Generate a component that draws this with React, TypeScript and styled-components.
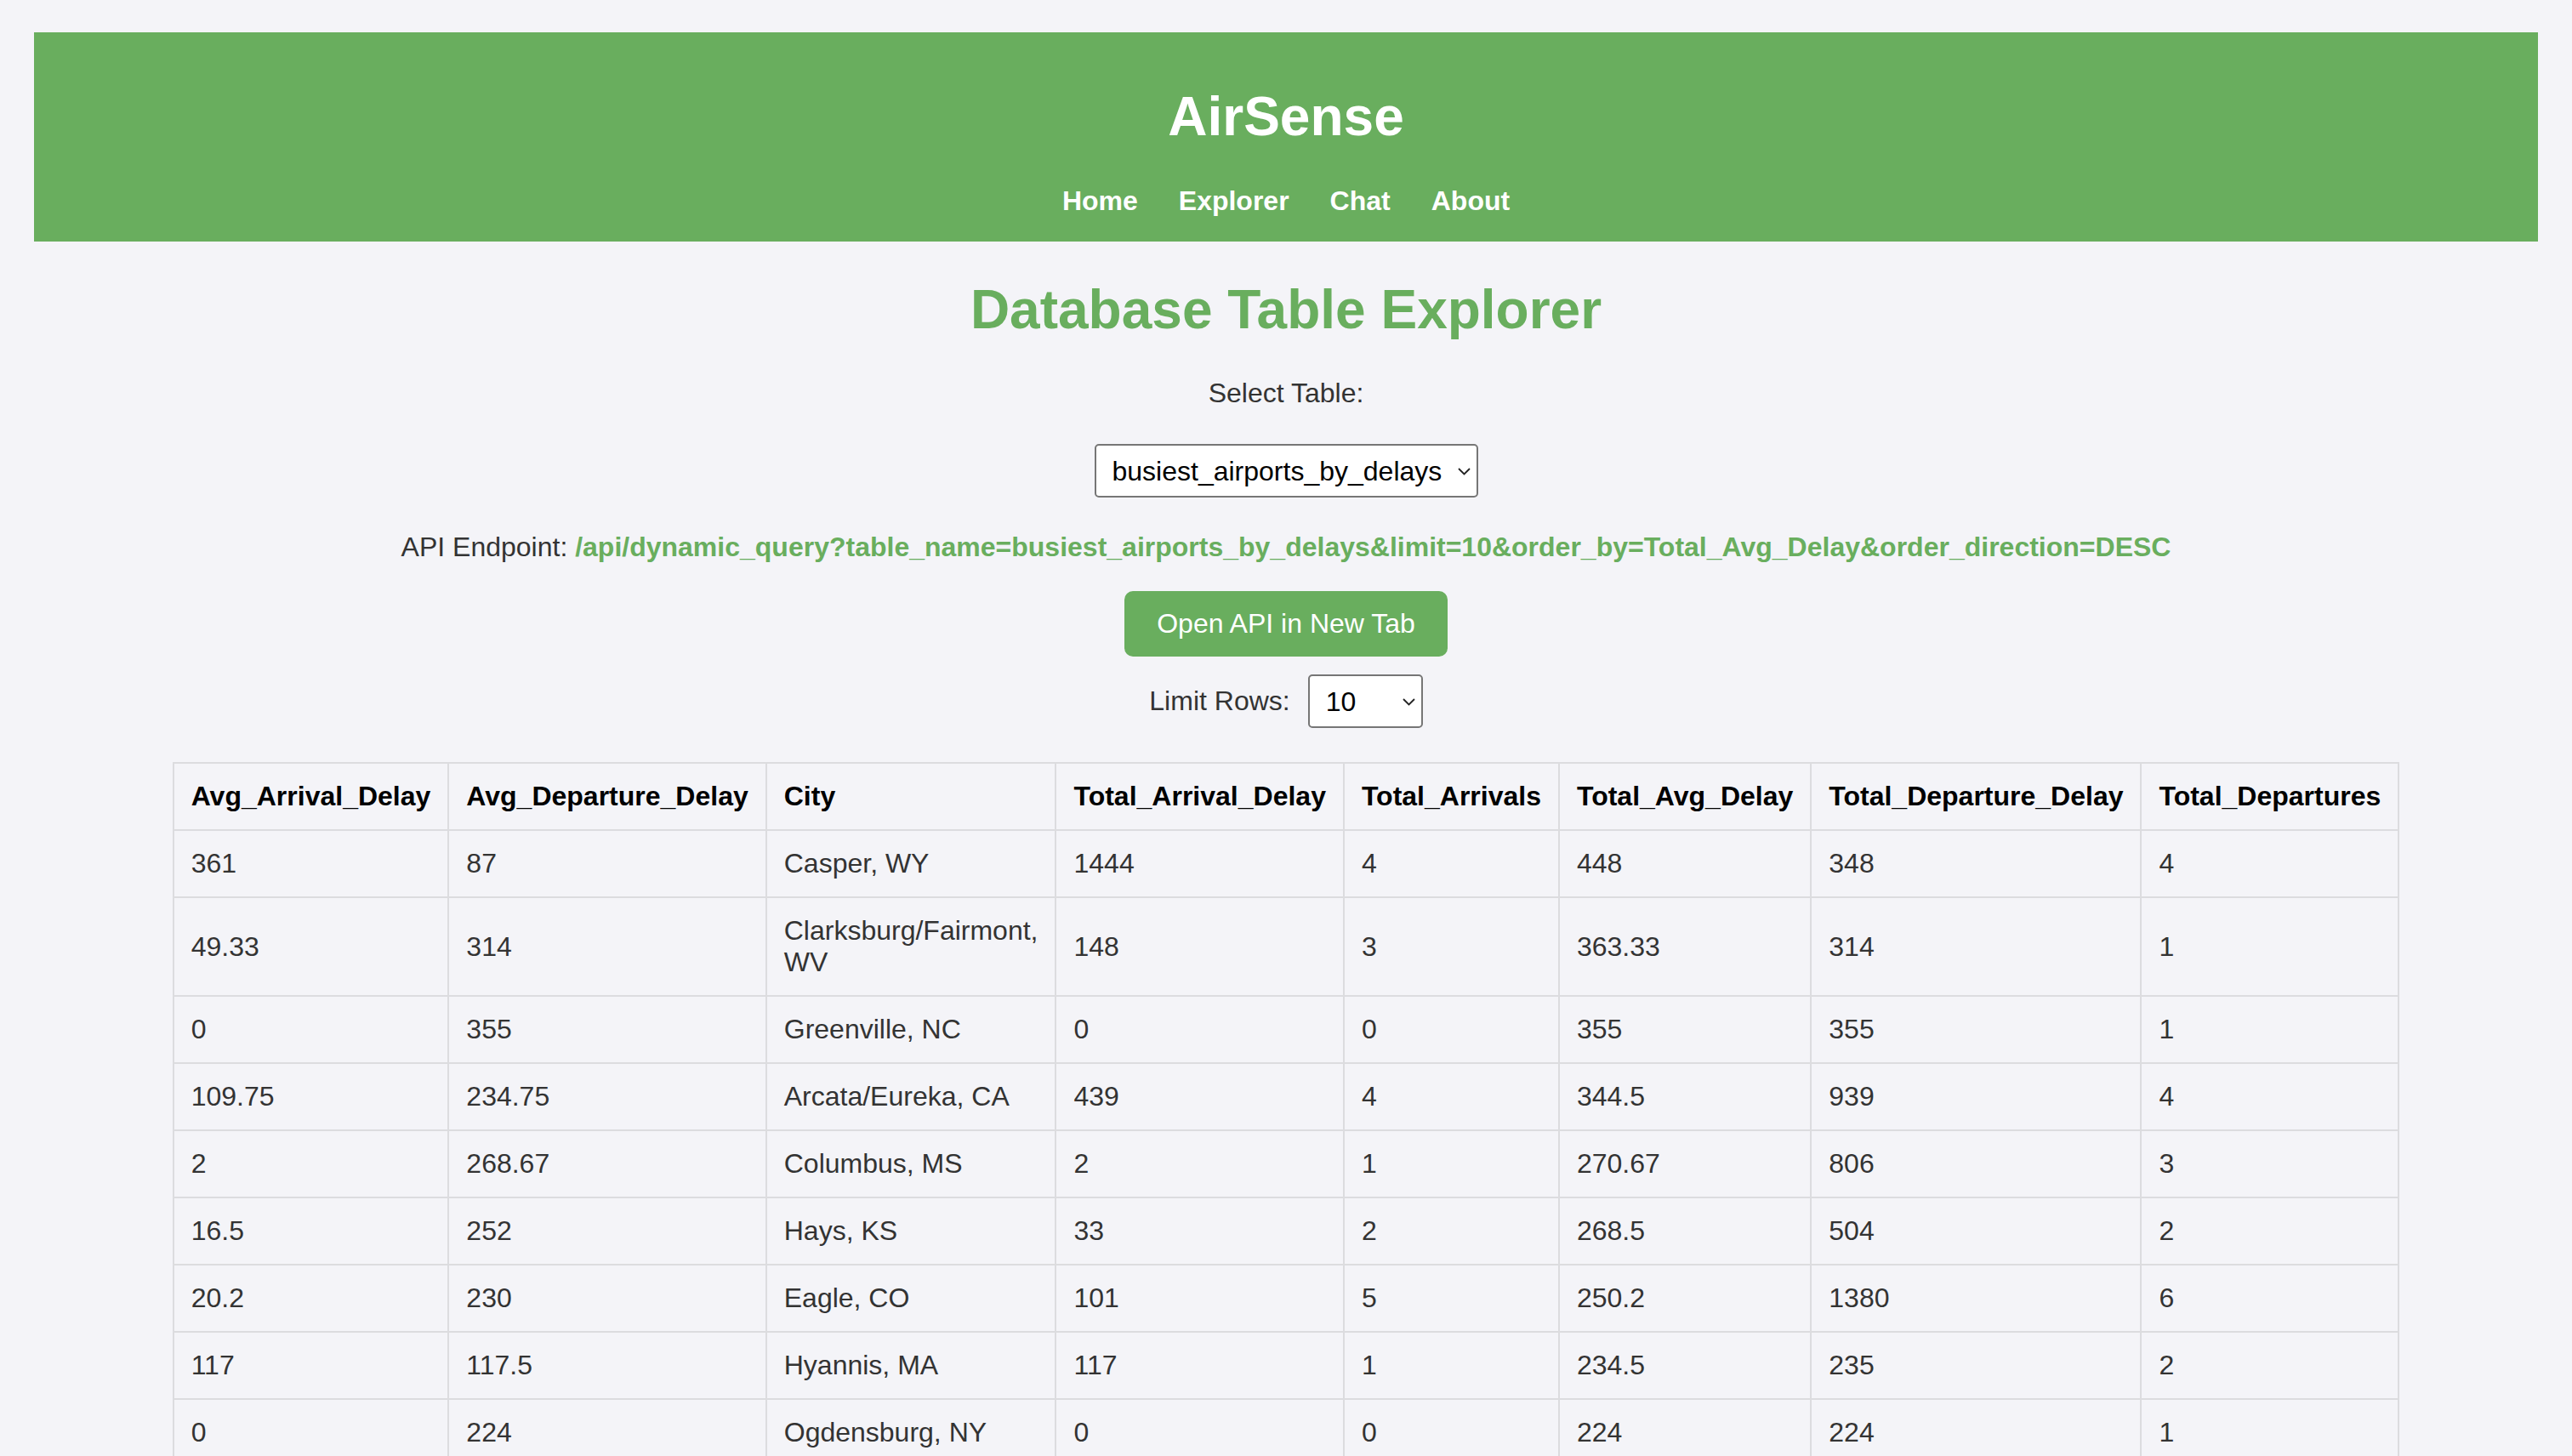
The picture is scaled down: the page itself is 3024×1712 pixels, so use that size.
import React from "react";
import styled, { createGlobalStyle } from "styled-components";

const GREEN = "#69ae5e";

const GlobalStyle = createGlobalStyle`
  html, body {
    margin: 0;
    padding: 0;
    background: #f4f4f8;
    font-family: "Liberation Sans", Arial, Helvetica, sans-serif;
    color: #333;
  }
`;

const Page = styled.div`
  padding: 38px 40px 0;
`;

const Header = styled.header`
  background: ${GREEN};
  padding: 30px 0 29px;
  text-align: center;
  color: #fff;
`;

const Brand = styled.h1`
  margin: 32px 0 44px;
  font-size: 64px;
  line-height: 74px;
  font-weight: 700;
`;

const Nav = styled.nav`
  display: flex;
  justify-content: center;
  line-height: 37px;
`;

const NavLink = styled.a`
  margin: 0 24px;
  color: #fff;
  font-size: 32px;
  font-weight: 700;
  text-decoration: none;
`;

const Main = styled.main`
  display: flex;
  flex-direction: column;
  align-items: center;
`;

const Title = styled.h2`
  margin: 43px 0 43px;
  font-size: 64px;
  line-height: 74px;
  font-weight: 700;
  color: ${GREEN};
`;

const Label = styled.label`
  font-size: 32px;
  line-height: 37px;
  color: #333;
`;

const SelectWrap = styled.div<{ $mt: number; $w: number }>`
  position: relative;
  margin-top: ${(p) => p.$mt}px;
  width: ${(p) => p.$w}px;
  height: 63px;
`;

const Select = styled.select`
  appearance: none;
  -webkit-appearance: none;
  box-sizing: border-box;
  width: 100%;
  height: 100%;
  padding: 0 40px 0 19px;
  border: 2px solid #767676;
  border-radius: 5px;
  background: #fff;
  color: #000;
  font-family: "Liberation Sans", Arial, Helvetica, sans-serif;
  font-size: 32px;
  outline: none;
`;

const Chevron = styled.svg`
  position: absolute;
  right: 9px;
  top: 50%;
  margin-top: -4px;
  width: 15px;
  height: 9px;
  pointer-events: none;
`;

const ApiLine = styled.p`
  margin: 40px 0 0;
  font-size: 32px;
  line-height: 37px;
  color: #333;
`;

const ApiLink = styled.a`
  color: ${GREEN};
  font-weight: 700;
  text-decoration: none;
`;

const Button = styled.button`
  margin-top: 33px;
  height: 77px;
  padding: 0 38px;
  border: none;
  border-radius: 10px;
  background: ${GREEN};
  color: #fff;
  font-family: "Liberation Sans", Arial, Helvetica, sans-serif;
  font-size: 32px;
  cursor: pointer;
`;

const LimitRow = styled.div`
  margin-top: 21px;
  display: flex;
  align-items: center;
  gap: 21px;
`;

const Table = styled.table`
  margin-top: 40px;
  width: 2616px;
  border-collapse: collapse;
  font-size: 32px;
  line-height: 37px;
`;

const Th = styled.th`
  padding: 20px;
  border: 2px solid #dcdcdf;
  text-align: left;
  font-weight: 700;
  color: #000;
`;

const Td = styled.td`
  padding: 20px;
  border: 2px solid #dcdcdf;
  text-align: left;
  color: #333;
`;

const columns = [
  "Avg_Arrival_Delay",
  "Avg_Departure_Delay",
  "City",
  "Total_Arrival_Delay",
  "Total_Arrivals",
  "Total_Avg_Delay",
  "Total_Departure_Delay",
  "Total_Departures",
];

const rows: (string | number)[][] = [
  [361, 87, "Casper, WY", 1444, 4, 448, 348, 4],
  [49.33, 314, "Clarksburg/Fairmont, WV", 148, 3, 363.33, 314, 1],
  [0, 355, "Greenville, NC", 0, 0, 355, 355, 1],
  [109.75, 234.75, "Arcata/Eureka, CA", 439, 4, 344.5, 939, 4],
  [2, 268.67, "Columbus, MS", 2, 1, 270.67, 806, 3],
  [16.5, 252, "Hays, KS", 33, 2, 268.5, 504, 2],
  [20.2, 230, "Eagle, CO", 101, 5, 250.2, 1380, 6],
  [117, 117.5, "Hyannis, MA", 117, 1, 234.5, 235, 2],
  [0, 224, "Ogdensburg, NY", 0, 0, 224, 224, 1],
  [12, 205.5, "Pierre, SD", 24, 2, 217.5, 411, 2],
];

const ChevronIcon = () => (
  <Chevron viewBox="0 0 15 9">
    <polyline points="1,1 7.5,7.5 14,1" fill="none" stroke="#222" strokeWidth="1.8" />
  </Chevron>
);

export default function App() {
  return (
    <>
      <GlobalStyle />
      <Page>
        <Header>
          <Brand>AirSense</Brand>
          <Nav>
            <NavLink href="#">Home</NavLink>
            <NavLink href="#">Explorer</NavLink>
            <NavLink href="#">Chat</NavLink>
            <NavLink href="#">About</NavLink>
          </Nav>
        </Header>
        <Main>
          <Title>Database Table Explorer</Title>
          <Label htmlFor="table-select">Select Table:</Label>
          <SelectWrap $mt={41} $w={451}>
            <Select id="table-select" defaultValue="busiest_airports_by_delays">
              <option value="busiest_airports_by_delays">busiest_airports_by_delays</option>
            </Select>
            <ChevronIcon />
          </SelectWrap>
          <ApiLine>
            API Endpoint:{" "}
            <ApiLink href="#">
              /api/dynamic_query?table_name=busiest_airports_by_delays&amp;limit=10&amp;order_by=Total_Avg_Delay&amp;order_direction=DESC
            </ApiLink>
          </ApiLine>
          <Button>Open API in New Tab</Button>
          <LimitRow>
            <Label htmlFor="limit-select">Limit Rows:</Label>
            <SelectWrap $mt={0} $w={135}>
              <Select id="limit-select" defaultValue="10">
                <option value="10">10</option>
                <option value="20">20</option>
                <option value="50">50</option>
                <option value="100">100</option>
              </Select>
              <ChevronIcon />
            </SelectWrap>
          </LimitRow>
          <Table>
            <thead>
              <tr>
                {columns.map((c) => (
                  <Th key={c}>{c}</Th>
                ))}
              </tr>
            </thead>
            <tbody>
              {rows.map((r, i) => (
                <tr key={i}>
                  {r.map((v, j) => (
                    <Td key={j}>{v}</Td>
                  ))}
                </tr>
              ))}
            </tbody>
          </Table>
        </Main>
      </Page>
    </>
  );
}
